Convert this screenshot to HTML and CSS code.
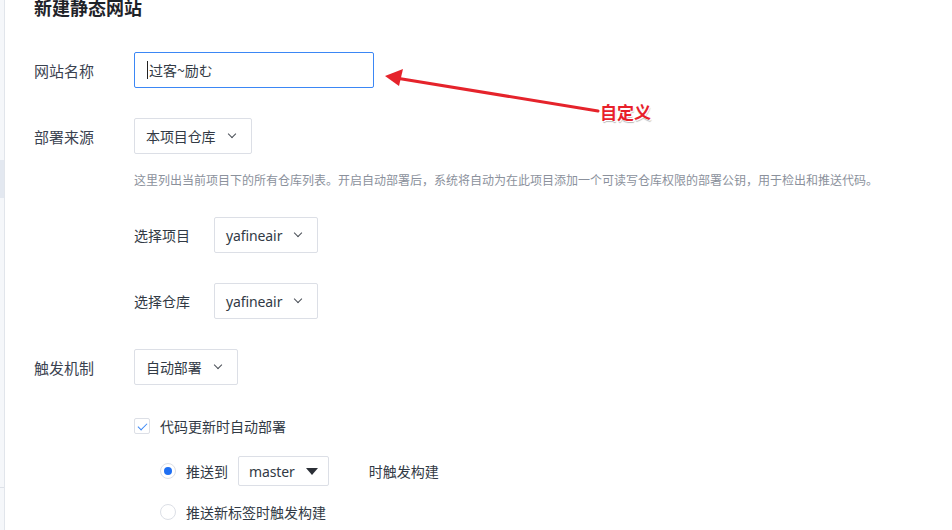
FILE: index.html
```html
<!DOCTYPE html>
<html>
  <head>
    <meta charset="utf-8">
    <title>新建静态网站</title>
    <link rel="stylesheet" href="styles.css">
  </head>
  <body>
    <div class="layout">
      <aside class="sidebar">
        <div class="sidebar__active"></div>
        <div class="sidebar__rule"></div>
      </aside>

      <main class="page">
        <h1 class="page__title">新建静态网站</h1>

        <div class="form-item form-item--first">
          <label class="form-item__label">网站名称</label>
          <div class="input is-focus"><span class="input__caret"></span>过客~励む</div>
        </div>

        <div class="form-item">
          <label class="form-item__label">部署来源</label>
          <div class="select">本项目仓库 <span class="chevron"></span></div>
        </div>
        <p class="form-hint">这里列出当前项目下的所有仓库列表。开启自动部署后，系统将自动为在此项目添加一个可读写仓库权限的部署公钥，用于检出和推送代码。</p>

        <div class="sub-item">
          <label class="sub-item__label">选择项目</label>
          <div class="select">yafineair <span class="chevron"></span></div>
        </div>
        <div class="sub-item">
          <label class="sub-item__label">选择仓库</label>
          <div class="select">yafineair <span class="chevron"></span></div>
        </div>

        <div class="form-item">
          <label class="form-item__label">触发机制</label>
          <div class="select">自动部署 <span class="chevron"></span></div>
        </div>

        <div class="check-row">
          <span class="checkbox is-checked"></span>
          代码更新时自动部署
        </div>

        <div class="radio-row">
          <span class="radio is-checked"></span>
          推送到
          <div class="select select--small">master <span class="caret"></span></div>
          <span class="radio-row__after">时触发构建</span>
        </div>
        <div class="radio-row radio-row--last">
          <span class="radio"></span>
          推送新标签时触发构建
        </div>
      </main>
    </div>

    <!-- annotation drawn over the screenshot -->
    <svg class="note-arrow" width="952" height="530" viewBox="0 0 952 530">
      <line x1="598" y1="111" x2="396" y2="78" stroke="#e5232b" stroke-width="3" stroke-linecap="round"/>
      <polygon points="385,76 403,69 399,86" fill="#e5232b"/>
    </svg>
    <span class="note-label">自定义</span>
  </body>
</html>
```

FILE: styles.css
```css
/* Base */
* {
  box-sizing: border-box;
}

html,
body {
  height: 100%;
}

body {
  background: #fff;
  color: #323a45;
  font-family: "Noto Sans", "Noto Sans CJK SC", sans-serif;
  font-size: 14px;
  margin: 0;
  overflow: hidden;
}

/* Layout */
.layout {
  display: flex;
  height: 100%;
}

.sidebar {
  background: #f5f7fa;
  border-right: 1px solid #e1e5eb;
  display: flex;
  flex-direction: column;
  flex: 0 0 5px;
}
.sidebar__active {
  background: #e3e8f0;
  height: 38px;
  margin-top: 160px;
}
.sidebar__rule {
  border-top: 1px solid #dde1e8;
  margin-top: 289px;
}

.page {
  flex: 1;
  padding-left: 29px;
}

.page__title {
  color: #1f2329;
  font-family: "Noto Sans CJK SC", sans-serif;
  font-size: 18px;
  font-weight: bold;
  line-height: 24px;
  margin: -5px 0 0;
}

/* Form rows */
.form-item {
  align-items: center;
  display: flex;
  height: 36px;
  margin-top: 30px;
}
.form-item--first {
  margin-top: 33px;
}
.form-item__label {
  color: #3b4250;
  font-family: "Noto Sans CJK SC", sans-serif;
  font-size: 15px;
  width: 100px;
}

.sub-item {
  align-items: center;
  display: flex;
  height: 36px;
  margin-left: 100px;
  margin-top: 27px;
}
.sub-item + .sub-item {
  margin-top: 30px;
}
.sub-item__label {
  font-family: "Noto Sans CJK SC", sans-serif;
  width: 80px;
}

.form-hint {
  color: #8b919c;
  font-family: "Noto Sans CJK SC", sans-serif;
  font-size: 12px;
  line-height: 20px;
  margin: 16px 0 0 100px;
}

/* Controls */
.input {
  align-items: center;
  border: 1px solid #dcdfe6;
  border-radius: 2px;
  display: flex;
  font-family: "Noto Sans CJK SC", sans-serif;
  height: 36px;
  padding: 0 12px;
  width: 240px;
}
.input.is-focus {
  border-color: #3b87f5;
}
.input__caret {
  background: #222;
  height: 18px;
  margin-right: 1px;
  width: 1px;
}

.select {
  align-items: center;
  border: 1px solid #dcdfe6;
  border-radius: 2px;
  display: flex;
  font-family: "Noto Sans", "Noto Sans CJK SC", sans-serif;
  gap: 8px;
  height: 36px;
  letter-spacing: -0.1px;
  padding: 0 14px 0 11px;
}
.select--small {
  gap: 11px;
  height: 30px;
  padding: 0 10px;
}

.chevron {
  border-bottom: 1.5px solid #4a4f57;
  border-right: 1.5px solid #4a4f57;
  display: inline-block;
  height: 6px;
  margin: -4px 2px 0 5px;
  transform: rotate(45deg);
  width: 6px;
}

.caret {
  border-left: 6px solid transparent;
  border-right: 6px solid transparent;
  border-top: 7px solid #2b2f36;
  display: inline-block;
  height: 0;
  width: 0;
}

.check-row,
.radio-row {
  align-items: center;
  display: flex;
  font-family: "Noto Sans CJK SC", sans-serif;
  gap: 10px;
}
.check-row {
  height: 24px;
  margin: 29px 0 0 100px;
}
.radio-row {
  height: 30px;
  margin: 18px 0 0 126px;
}
.radio-row--last {
  height: 24px;
  margin-top: 14px;
}
.radio-row__after {
  margin-left: 30px;
}

.checkbox {
  border: 1px solid #dcdfe6;
  border-radius: 2px;
  height: 16px;
  position: relative;
  width: 16px;
}
.checkbox.is-checked::after {
  border-bottom: 1px solid #3b87f5;
  border-right: 1px solid #3b87f5;
  content: "";
  height: 8px;
  left: 5px;
  position: absolute;
  top: 2px;
  transform: rotate(45deg);
  width: 4px;
}

.radio {
  border: 1px solid #dcdfe6;
  border-radius: 50%;
  height: 16px;
  position: relative;
  width: 16px;
}
.radio.is-checked::after {
  background: #1f6ff2;
  border-radius: 50%;
  content: "";
  height: 8px;
  left: 3px;
  position: absolute;
  top: 3px;
  width: 8px;
}

/* Annotation */
.note-arrow {
  left: 0;
  pointer-events: none;
  position: absolute;
  top: 0;
}
.note-label {
  color: #e8202a;
  font-family: "Noto Sans CJK SC", sans-serif;
  font-size: 17px;
  font-weight: bold;
  left: 600px;
  line-height: 22px;
  position: absolute;
  text-shadow: 1px 1px 0 #fff, -1px -1px 0 #fff, 1px 2px 1px #bbb;
  top: 101px;
}
```
